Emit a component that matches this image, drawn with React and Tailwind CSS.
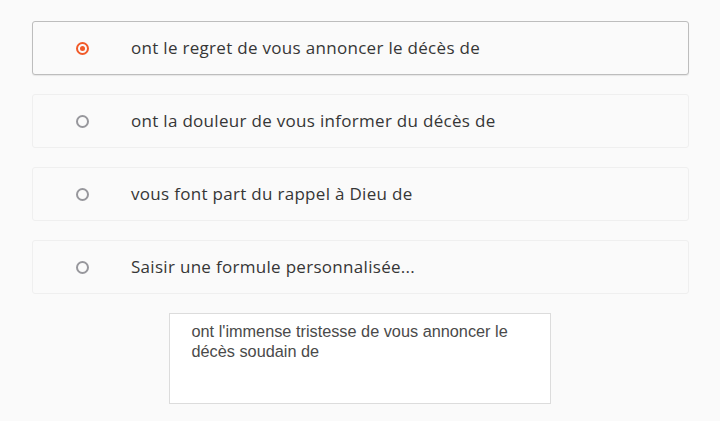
import React from "react";

const options = [
  { label: "ont le regret de vous annoncer le décès de", selected: true },
  { label: "ont la douleur de vous informer du décès de" },
  { label: "vous font part du rappel à Dieu de" },
  { label: "Saisir une formule personnalisée..." },
];

function Radio({ selected }) {
  if (selected) {
    return (
      <span className="flex h-[13px] w-[13px] items-center justify-center rounded-full border-2 border-[#f15a29]">
        <span className="h-[5px] w-[5px] rounded-full bg-[#f15a29]" />
      </span>
    );
  }
  return <span className="block h-[13px] w-[13px] rounded-full border-2 border-[#97979c]" />;
}

export default function App() {
  return (
    <div className="min-h-[421px] w-[720px] bg-[#fafafa] pt-[21px]" style={{ fontFamily: '"Open Sans", sans-serif' }}>
      <div className="ml-[32px] flex w-[657px] flex-col gap-[19px]">
        {options.map((o, i) => (
          <div
            key={i}
            className={`flex h-[54px] items-center rounded-[3px] border bg-[#fafafa] ${
              o.selected ? "border-[#bdbdbd] shadow-[0_1px_1px_rgba(0,0,0,0.08)]" : "border-[#efefef]"
            }`}
          >
            <div className="flex w-[98px] justify-center">
              <Radio selected={o.selected} />
            </div>
            <span className="text-[17px] tracking-[0.3px] text-[#363636]">{o.label}</span>
          </div>
        ))}
      </div>
      <div className="mt-[19px] flex justify-center pr-[1px]">
        <div
          className="h-[91px] w-[382px] border border-[#dcdcdc] bg-white px-[22px] pt-[7px] text-[16.3px] leading-[20px] text-[#4a4a4a]"
          style={{ fontFamily: '"Liberation Sans", Arial, sans-serif' }}
        >
          ont l'immense tristesse de vous annoncer le décès soudain de
        </div>
      </div>
    </div>
  );
}
